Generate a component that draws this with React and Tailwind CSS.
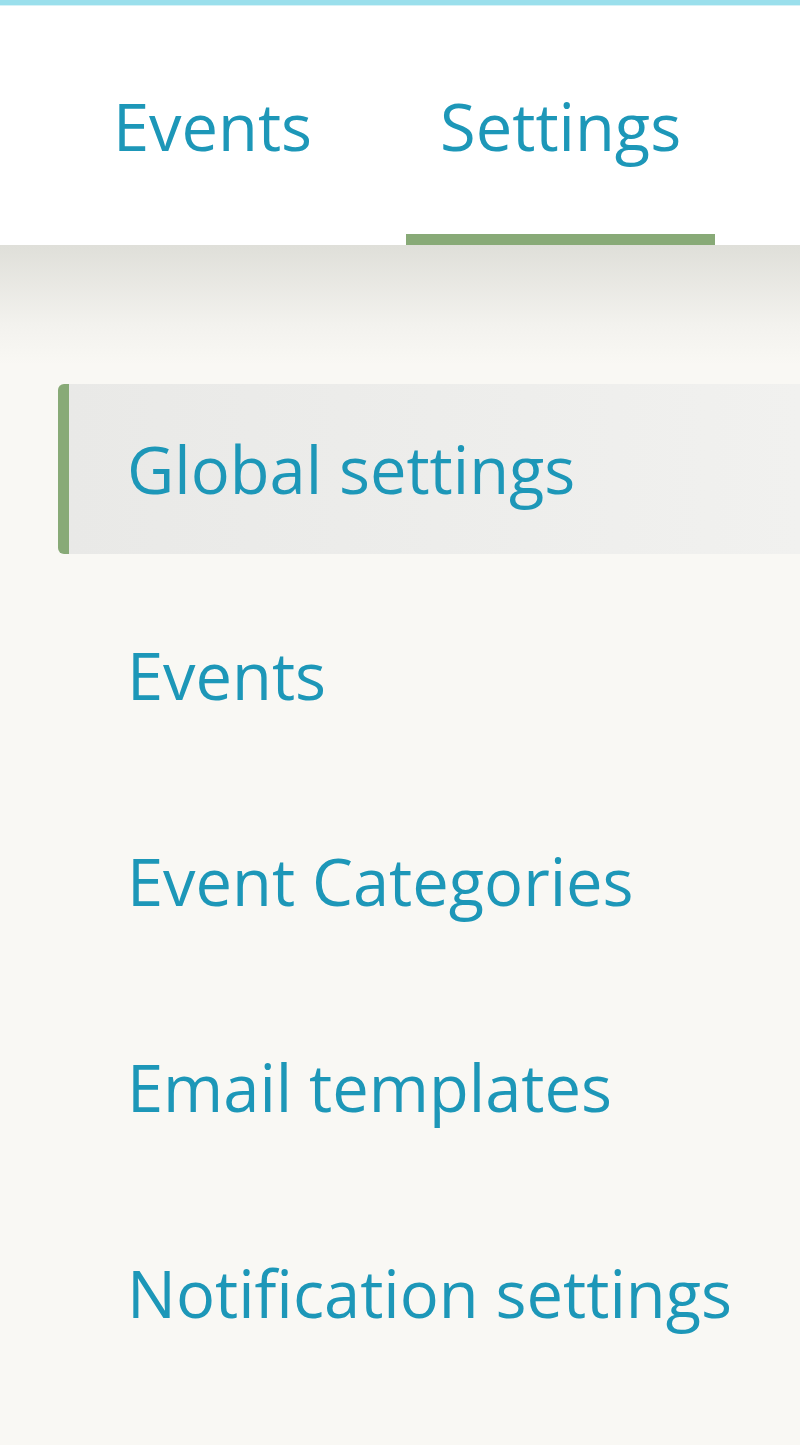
const tabs = [
  { id: "events", label: "Events" },
  { id: "settings", label: "Settings" },
];

const menu = [
  "Global settings",
  "Events",
  "Event Categories",
  "Email templates",
  "Notification settings",
];

export default function App() {
  const activeTab = "settings";
  const activeItem = "Global settings";

  return (
    <div
      className="min-h-[1445px] w-[800px] overflow-hidden bg-[#f9f8f4] text-[#1d97b8]"
      style={{ fontFamily: "'Open Sans', 'Noto Sans', sans-serif" }}
    >
      {/* top accent */}
      <div className="h-[5px] bg-[#9adfec]" />
      <div className="h-px bg-[#d6f2f7]" />

      {/* tabs */}
      <div className="flex h-[239px] items-stretch bg-white pl-[77px]">
        {tabs.map((t) => {
          const on = t.id === activeTab;
          return (
            <div
              key={t.id}
              className={
                on
                  ? "ml-[58px] flex items-start border-b-[11px] border-[#88aa77] px-[34px] pt-[88px]"
                  : "flex items-start px-[36px] pt-[88px]"
              }
            >
              <span className="text-[65px] leading-none">{t.label}</span>
            </div>
          );
        })}
      </div>

      {/* side menu */}
      <div className="flex flex-col gap-[36px] bg-[linear-gradient(to_bottom,#dfdfd9_0px,#f3f2ee_80px,#f9f8f4_120px)] pt-[139px]">
        {menu.map((m) => {
          const on = m === activeItem;
          return (
            <div
              key={m}
              className={
                on
                  ? "ml-[58px] flex h-[170px] items-center rounded-l-[6px] border-l-[11px] border-[#88aa77] bg-[linear-gradient(to_right,#e9e9e7,#f1f1ef)] pl-[58px]"
                  : "ml-[58px] flex h-[170px] items-center pl-[69px]"
              }
            >
              <span className="whitespace-nowrap text-[65px] leading-none">{m}</span>
            </div>
          );
        })}
      </div>
    </div>
  );
}
